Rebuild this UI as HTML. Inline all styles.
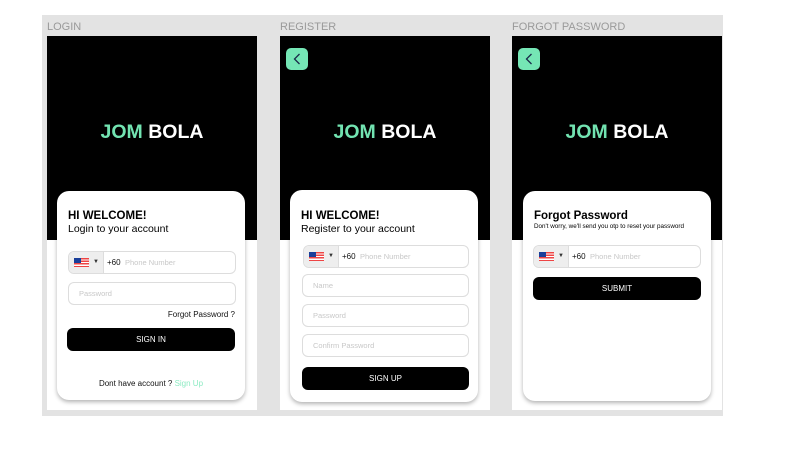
<!DOCTYPE html>
<html><head><style>
*{margin:0;padding:0;box-sizing:border-box}
body{width:786px;height:455px;background:#fff;position:relative;overflow:hidden;font-family:"Liberation Sans",Arial,sans-serif}
.a{position:absolute}
.panel{left:42px;top:15px;width:681px;height:401px;background:#e3e3e3}
.lbl{font-size:11px;color:#9a9a9a;top:21px}
.frame{top:36px;width:210px;height:374px;background:#fff;overflow:hidden}
.frame .top{position:absolute;left:0;top:0;width:100%;height:204px;background:#000}
.logo{position:absolute;left:0;width:100%;top:85px;text-align:center;font-weight:bold;font-size:19.5px;color:#fff}
.logo span{color:#72e3b1}
.back{position:absolute;left:6px;top:12px;width:22px;height:22px;border-radius:5px;background:#75e6b5}
.card{position:absolute;background:#fff;border-radius:12px;box-shadow:0 2px 4px rgba(0,0,0,.3)}
.t1{position:absolute;left:11px;font-weight:bold;font-size:11.5px;color:#000}
.t2{position:absolute;left:11px;font-size:10.5px;color:#000}
.inp{position:absolute;left:11px;width:168px;height:23px;border:1px solid #ddd;border-radius:6px;font-size:7.5px;color:#c8c8c8;padding-left:10px;line-height:21px;background:#fff}
.ph{padding-left:0;overflow:hidden}
.ph .fl{position:absolute;left:0;top:0;width:35px;height:21px;background:#eee;border-right:1px solid #ddd}
.ph .fl i{position:absolute;left:5px;top:6px;width:15px;height:9px;background:repeating-linear-gradient(#e44 0 1.3px,#fff 1.3px 2.6px)}
.ph .fl i:before{content:"";position:absolute;left:0;top:0;width:7px;height:5px;background:#1a3f9a}
.ph .fl b{position:absolute;left:24px;top:0;font-size:6px;color:#333}
.ph .cc{position:absolute;left:38px;color:#111;font-size:8px}
.ph .pn{position:absolute;left:56px}
.btn{position:absolute;left:10px;width:168px;height:23px;background:#000;border-radius:6px;color:#fff;font-size:8px;text-align:center;line-height:23px}
</style></head><body>
<div class="a panel"></div>
<div class="a lbl" style="left:47px">LOGIN</div>
<div class="a lbl" style="left:280px">REGISTER</div>
<div class="a lbl" style="left:512px">FORGOT PASSWORD</div>

<div class="a frame" style="left:47px">
 <div class="top"></div>
 <div class="logo"><span>JOM</span> BOLA</div>
 <div class="card" style="left:10px;top:155px;width:188px;height:209px">
  <div class="t1" style="top:19px">HI WELCOME!</div>
  <div class="t2" style="top:32px">Login to your account</div>
  <div class="inp ph" style="top:60px"><div class="fl"><i></i><b>▼</b></div><span class="cc">+60</span><span class="pn">Phone Number</span></div>
  <div class="inp" style="top:91px">Password</div>
  <div class="a" style="right:10px;top:119px;font-size:8px;color:#111">Forgot Password ?</div>
  <div class="btn" style="top:137px">SIGN IN</div>
  <div class="a" style="left:0;width:100%;text-align:center;top:188px;font-size:8px;color:#111">Dont have account ? <span style="color:#8eebc3">Sign Up</span></div>
 </div>
</div>

<div class="a frame" style="left:280px">
 <div class="top"></div>
 <div class="back"><svg width="22" height="22"><path d="M13.5 6 L8.5 11 L13.5 16" fill="none" stroke="#1a2a4a" stroke-width="1.3"/></svg></div>
 <div class="logo"><span>JOM</span> BOLA</div>
 <div class="card" style="left:10px;top:154px;width:188px;height:212px">
  <div class="t1" style="top:20px">HI WELCOME!</div>
  <div class="t2" style="top:33px">Register to your account</div>
  <div class="inp ph" style="top:55px;left:13px;width:166px"><div class="fl"><i></i><b>▼</b></div><span class="cc">+60</span><span class="pn">Phone Number</span></div>
  <div class="inp" style="top:84px;left:12px;width:167px">Name</div>
  <div class="inp" style="top:114px;left:12px;width:167px">Password</div>
  <div class="inp" style="top:144px;left:12px;width:167px">Confirm Password</div>
  <div class="btn" style="left:12px;top:177px;width:167px">SIGN UP</div>
 </div>
</div>

<div class="a frame" style="left:512px">
 <div class="top"></div>
 <div class="back"><svg width="22" height="22"><path d="M13.5 6 L8.5 11 L13.5 16" fill="none" stroke="#1a2a4a" stroke-width="1.3"/></svg></div>
 <div class="logo"><span>JOM</span> BOLA</div>
 <div class="card" style="left:11px;top:155px;width:188px;height:210px">
  <div class="t1" style="top:19px;font-size:11.5px">Forgot Password</div>
  <div class="t2" style="top:32px;font-size:6.3px">Don't worry, we'll send you otp to reset your password</div>
  <div class="inp ph" style="left:10px;top:54px"><div class="fl"><i></i><b>▼</b></div><span class="cc">+60</span><span class="pn">Phone Number</span></div>
  <div class="btn" style="top:86px">SUBMIT</div>
 </div>
</div>
</body></html>
